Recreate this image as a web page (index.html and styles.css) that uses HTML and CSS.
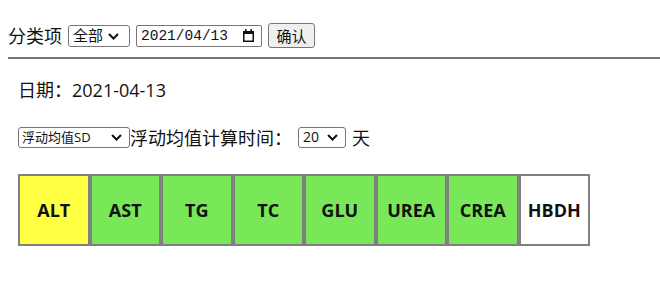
FILE: index.html
```html
<!DOCTYPE html>
<html lang="zh-CN">
<head>
  <meta charset="UTF-8">
  <title>浮动均值</title>
  <link rel="stylesheet" href="styles.css">
</head>
<body>
  <div class="toolbar">
    <span>分类项</span>
    <span class="sel-wrap">
      <select class="sel sel-cat">
        <option>全部</option>
      </select>
      <svg class="chev" width="11" height="7" viewBox="0 0 11 7"><polyline points="1,1 5.5,5.5 10,1" fill="none" stroke="#111" stroke-width="2"/></svg>
    </span>
    <div class="date-pick">
      <span>2021/04/13</span>
      <svg width="11" height="13" viewBox="0 0 11 13"><rect x="0.75" y="2.75" width="9.5" height="9.5" fill="none" stroke="#111" stroke-width="1.5"/><rect x="0" y="2" width="11" height="3" fill="#111"/><rect x="2" y="0" width="1.5" height="3" fill="#111"/><rect x="7.5" y="0" width="1.5" height="3" fill="#111"/></svg>
    </div>
    <button class="btn-ok">确认</button>
  </div>

  <div class="content">
    <p class="date-line">日期：2021-04-13</p>

    <div class="opt-row">
      <span class="sel-wrap">
        <select class="sel sel-mode">
          <option>浮动均值SD</option>
        </select>
        <svg class="chev" width="11" height="7" viewBox="0 0 11 7"><polyline points="1,1 5.5,5.5 10,1" fill="none" stroke="#111" stroke-width="2"/></svg>
      </span>
      <span>浮动均值计算时间：</span>
      <span class="sel-wrap days">
        <select class="sel sel-days">
          <option>20</option>
        </select>
        <svg class="chev" width="11" height="7" viewBox="0 0 11 7"><polyline points="1,1 5.5,5.5 10,1" fill="none" stroke="#111" stroke-width="2"/></svg>
      </span>
      <span>天</span>
    </div>

    <div class="items">
      <div class="item warn">ALT</div>
      <div class="item ok">AST</div>
      <div class="item ok">TG</div>
      <div class="item ok">TC</div>
      <div class="item ok">GLU</div>
      <div class="item ok">UREA</div>
      <div class="item ok">CREA</div>
      <div class="item">HBDH</div>
    </div>
  </div>
</body>
</html>
```

FILE: styles.css
```css
body { margin: 8px 0 8px 8px; font-family: "Open Sans", "Noto Sans CJK SC", sans-serif; font-size: 18px; color: #111; background: #fff; }
select, input, button { font-family: "Open Sans", "Noto Sans CJK SC", sans-serif; box-sizing: border-box; margin: 0; color: #111; }

.toolbar {
  display: flex; align-items: center; gap: 6px;
  margin-top: 15px; padding-bottom: 9px;
  border-bottom: 2px solid #6e7681;
  height: 25px;
}
.toolbar span { line-height: 24px; }

.sel-wrap { position: relative; display: inline-flex; }
.sel {
  appearance: none; -webkit-appearance: none;
  background: #fff; border: 1px solid #767676; border-radius: 3px;
  padding: 0 0 0 4px; line-height: 1;
}
.chev { position: absolute; right: 11px; top: 50%; margin-top: -3px; pointer-events: none; }
.sel-cat { width: 62px; height: 22px; font-size: 15px; }

.date-pick {
  display: flex; align-items: center; justify-content: space-between;
  width: 126px; height: 22px; box-sizing: border-box;
  border: 1px solid #767676; border-radius: 2px;
  padding: 0 7px 0 4px;
  font-family: "Liberation Mono", monospace; font-size: 14.5px;
}
.btn-ok {
  width: 47px; height: 25px; font-size: 15px; padding: 0;
  background: #efefef; border: 1px solid #767676; border-radius: 3px;
}

.content { padding: 0 8px 0 10px; }
.date-line { margin: 19px 0 0; line-height: 24px; }

.opt-row { display: flex; align-items: center; height: 24px; margin-top: 23px; }
.sel-mode { width: 112px; height: 21px; font-size: 13px; padding-left: 3px; }
.sel-days { width: 48px; height: 21px; font-size: 14px; }
.sel-wrap.days { margin: 0 6px 0 6px; }
.sel-wrap.days .chev { right: 8px; }
.opt-row .sel-wrap:first-child .chev { right: 8px; }

.items { display: flex; margin-top: 25px; }
.item {
  width: 71.5px; height: 71.5px; box-sizing: border-box;
  border: 2px solid #808080;
  display: flex; align-items: center; justify-content: center;
  font-weight: bold; font-size: 18px; color: #111;
  background: #fff;
}
.item.warn { background: #ffff44; }
.item.ok { background: #78e858; }
```
